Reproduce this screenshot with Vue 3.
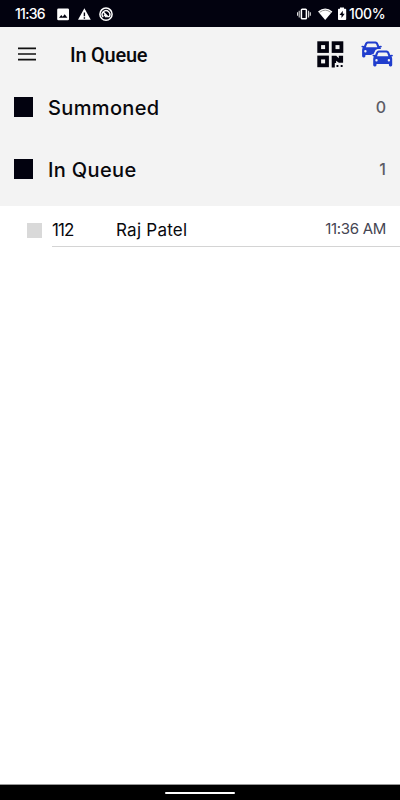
<script setup>
const groups = [
  { label: 'Summoned', count: 0 },
  { label: 'In Queue', count: 1 },
]
const guests = [{ ticket: '112', name: 'Raj Patel', time: '11:36 AM' }]
</script>

<template>
  <div class="screen">
    <div class="status">
      <span class="clock">11:36</span>
      <svg class="notices" width="60" height="16" viewBox="0 0 60 16">
        <path fill="#fff" fill-rule="evenodd" d="M2.5 2.5h9.2q1.3 0 1.3 1.3v9.2q0 1.2-1.3 1.2H2.5q-1.3 0-1.3-1.2V3.8q0-1.3 1.3-1.3zM3 11.8h8.4L8.7 8.2l-2 2.6-1.4-1.7z" />
        <path fill="#fff" fill-rule="evenodd" d="M28.4 2.2l6.4 11.6H22zM27.7 6.5v3.8h1.4V6.5zm0 4.8v1.4h1.4v-1.4z" />
        <circle cx="50" cy="8.2" r="6.1" fill="none" stroke="#fff" stroke-width="1.5" />
        <path d="M47.2 11.1a3.8 3.8 0 1 1 5.7-.1M47.5 6.3l5 5M48 8.8l2.5 2.5" fill="none" stroke="#fff" stroke-width="1.4" />
      </svg>
      <svg class="system" width="52" height="16" viewBox="0 0 52 16">
        <rect x="4.4" y="3.2" width="5" height="9.6" rx=".8" fill="none" stroke="#fff" stroke-width="1.5" />
        <path d="M2.2 4.7v6.7M.5 6.3v3.5M11.6 4.7v6.7M13.3 6.3v3.5" stroke="#ddd" stroke-width="1.1" />
        <path d="M21 5.6Q28.2-.4 35.4 5.6L28.2 14.1z" fill="#fff" />
        <path d="M22.7 6.3Q28.2 2 33.7 6.3" stroke="#777" stroke-width=".8" fill="none" />
        <path fill="#fff" fill-rule="evenodd" d="M43 2.8V1.5h4v1.3h1.4q.8 0 .8.8v9.6q0 .8-.8.8h-6.6q-.8 0-.8-.8V3.6q0-.8.8-.8zM45.8 4.7l-3.3 4.2h2v3.2l3.2-4.4h-1.9z" />
      </svg>
      <span class="battery">100%</span>
    </div>

    <header class="top">
      <div class="toolbar">
        <svg class="menu" width="18" height="14" viewBox="0 0 18 14">
          <path d="M0 1.3h18M0 7h18M0 12.7h18" stroke="#111" stroke-width="1.7" />
        </svg>
        <h1 class="title">In Queue</h1>
        <svg class="qr" width="27" height="27" viewBox="0 0 27 27">
          <g fill="none" stroke="#03030f" stroke-width="3.8">
            <rect x="2.2" y="2.2" width="7.8" height="7.8" />
            <rect x="16.6" y="2.2" width="7.8" height="7.8" />
            <rect x="2.2" y="16.5" width="7.8" height="7.8" />
          </g>
          <path fill="#03030f" d="M14.7 14.7h4.5l2.6 2.6v-2.6h4.3v7h-4.2l-2.8-2v2.2h-1.3v4.6h-3.1zM19.5 24h1.9v1.9h-1.9zM23.7 24h1.9v1.9h-1.9z" />
        </svg>
        <svg class="cars" width="32" height="28" viewBox="0 0 32 28">
          <defs>
            <path id="car" fill-rule="evenodd" d="M6.2.9h8q1.7 0 2.3 1.5l1.3 3.2 1.7-.3q.9 0 .9.8 0 .7-.8.8l-.8.2q.9.9.9 2.3v6.2q0 1.3-1.3 1.3h-.7q-1.3 0-1.3-1.3v-1H4v1q0 1.3-1.3 1.3H2q-1.3 0-1.3-1.3V9.4q0-1.4.9-2.3l-.8-.2Q0 6.800 0 6.100q0-.8.9-.8l1.7.3 1.3-3.2Q4.500.9 6.200.9zM6.700 2.900q-.7 0-1 .7L4.500 6.800h11.400l-1.200-3.200q-.3-.7-1-.7zM4 9.500a1.200 1.200 0 1 0 0 2.400 1.200 1.200 0 1 0 0-2.400zm12.400 0a1.200 1.200 0 1 0 0 2.400 1.200 1.200 0 1 0 0-2.400z" />
          </defs>
          <use href="#car" x=".4" y=".5" fill="#203dcd" />
          <path d="M10.700 28V18.600L9.800 17v-2l2.900-1.200 1.800-3.900 2-1H32V28z" fill="#f3f3f3" />
          <use href="#car" x="11.500" y="9.500" fill="#203dcd" />
        </svg>
      </div>
      <div v-for="group in groups" :key="group.label" class="group">
        <span class="box"></span>
        <span class="label">{{ group.label }}</span>
        <span class="count">{{ group.count }}</span>
      </div>
    </header>

    <main class="list">
      <div v-for="guest in guests" :key="guest.ticket" class="guest">
        <span class="mark"></span>
        <div class="line">
          <span class="ticket">{{ guest.ticket }}</span>
          <span class="name">{{ guest.name }}</span>
          <span class="time">{{ guest.time }}</span>
        </div>
      </div>
    </main>

    <footer class="nav"><span class="pill"></span></footer>
  </div>
</template>

<style>
body {
  margin: 0;
}
</style>

<style scoped>
.screen {
  width: 400px;
  height: 800px;
  display: flex;
  flex-direction: column;
  background: #fff;
  color: #08080c;
  font-family: Inter, sans-serif;
  overflow: hidden;
}
.status {
  height: 27px;
  flex: none;
  box-sizing: border-box;
  display: flex;
  align-items: center;
  padding: 1px 0 0 15px;
  background: #02020f;
  color: #fff;
  font: 500 14px/26px Inter, sans-serif;
}
.clock {
  width: 41px;
  letter-spacing: -0.7px;
}
.system {
  margin-left: 181px;
}
.battery {
  letter-spacing: -0.4px;
}
.top {
  height: 179px;
  flex: none;
  background: #f3f3f3;
}
.toolbar {
  height: 49px;
  display: flex;
  align-items: flex-start;
  padding-left: 18px;
}
.menu {
  margin-top: 20px;
}
.title {
  width: 247px;
  margin: 16px 0 0 34px;
  font: 500 20px/25px Roboto, sans-serif;
  letter-spacing: -0.25px;
}
.qr {
  margin-top: 14px;
}
.cars {
  margin: 13px 0 0 17px;
}
.group {
  height: 62px;
  display: flex;
  align-items: center;
  padding: 0 14px 0 13.5px;
}
.box {
  width: 19.5px;
  height: 19.5px;
  background: #02020f;
}
.label {
  flex: 1;
  margin-left: 15px;
  padding-top: 1px;
  font: 500 20px/28px Inter, sans-serif;
  letter-spacing: 0.35px;
}
.count {
  font: 500 16px/24px Inter, sans-serif;
  color: #5c5c66;
}
.list {
  flex: 1;
}
.guest {
  display: flex;
  align-items: flex-start;
  padding-left: 27px;
}
.mark {
  width: 15px;
  height: 15px;
  margin-top: 17px;
  background: #d9d9d9;
}
.line {
  flex: 1;
  display: flex;
  align-items: center;
  height: 41px;
  margin-left: 10px;
  padding: 7px 14px 0 0;
  box-sizing: border-box;
  border-bottom: 1px solid #d4d4d4;
  font-size: 17px;
  line-height: 24px;
}
.ticket {
  width: 64px;
  letter-spacing: -0.9px;
}
.name {
  flex: 1;
  letter-spacing: 0.25px;
}
.time {
  margin-top: -1px;
  font-size: 15px;
  letter-spacing: -0.3px;
  color: #454552;
}
.nav {
  height: 16px;
  flex: none;
  box-sizing: border-box;
  display: flex;
  justify-content: center;
  align-items: flex-start;
  padding-top: 7px;
  border-top: 1px solid #999;
  background: #000;
}
.pill {
  width: 70px;
  height: 2px;
  border-radius: 1px;
  background: #fff;
}
</style>
